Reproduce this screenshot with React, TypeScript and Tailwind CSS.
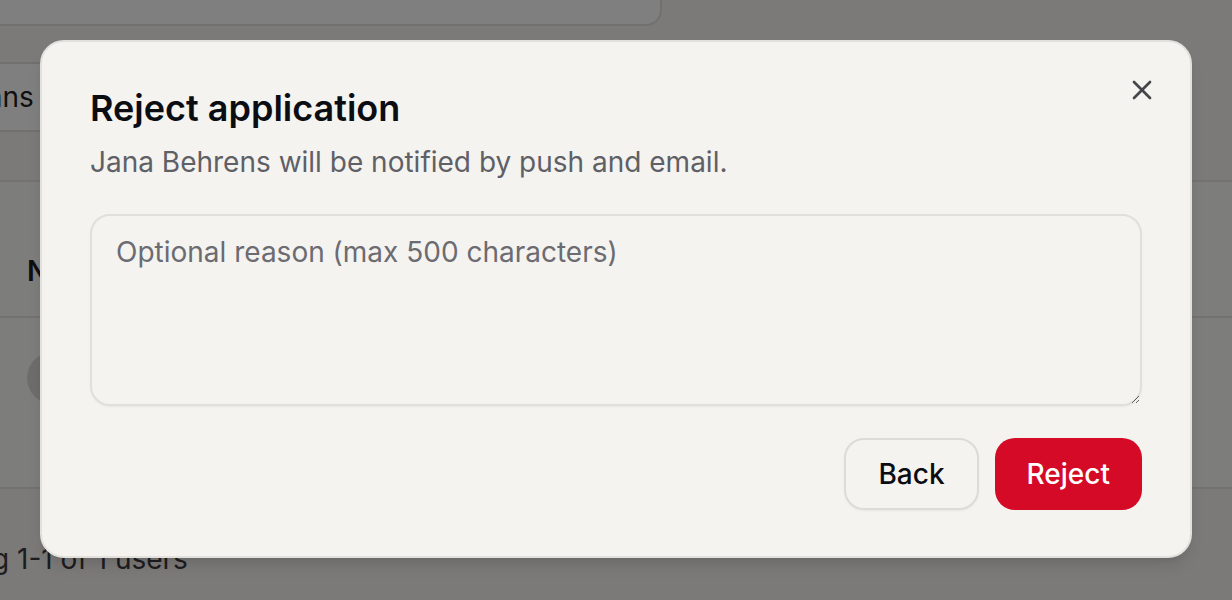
import { X } from "lucide-react";

function PageBehind() {
  return (
    <div className="flex flex-col text-[#1f1f23]">
      <div className="-mt-[50px] -ml-[64px] flex h-[76px] w-[726px] items-center rounded-[16px] border-2 border-[#e3e1dd] bg-white pl-[46px] text-[28px] text-[#6b6b70]">
        Search users...
      </div>
      <div className="mt-[36px] flex">
        <div className="-ml-[100px] flex h-[70px] w-[190px] items-center rounded-[16px] border-2 border-[#e3e1dd] bg-white pl-[20px] text-[28px]">
          All plans
        </div>
      </div>
      <div className="mt-[48px] flex h-[309px] flex-col border-y-2 border-[#e6e4e0] bg-[#fbfaf7]">
        <div className="flex h-[136px] items-end border-b-2 border-[#e6e4e0] pb-[24px] pl-[27px] text-[28px] font-semibold">
          Name
        </div>
        <div className="flex flex-1 items-start pt-[34px] pl-[27px]">
          <div className="h-[52px] w-[52px] rounded-full bg-[#dcdad6]" />
        </div>
      </div>
      <div className="flex h-[120px] items-center pt-[20px] text-[28px] text-[#3b3b40]">
        <span className="-ml-[105px]">Showing 1-1 of 1 users</span>
      </div>
    </div>
  );
}

export default function App() {
  return (
    <div className="relative h-[600px] w-full overflow-hidden bg-[#f6f4f0] font-['Inter',sans-serif]">
      <PageBehind />
      <div className="absolute inset-0 bg-black/50" />
      <div className="absolute top-[40px] left-[40px] flex w-[1152px] flex-col gap-[32px] rounded-[24px] border-2 border-[#e2e1dd] bg-[#f4f3f0] p-[48px] pb-[46px] shadow-lg">
        <div className="flex flex-col gap-[16px]">
          <h2 className="text-[36px] leading-none font-semibold text-[#0b0d12]">Reject application</h2>
          <p className="text-[28px] leading-[40px] text-[#5f5f66]">
            Jana Behrens will be notified by push and email.
          </p>
        </div>
        <textarea
          className="h-[192px] w-full resize-y rounded-[20px] border-2 border-[#e0dfdc] bg-transparent px-6 py-4 text-[28px] leading-[40px] text-[#0b0d12] shadow-xs outline-none placeholder:text-[#6b6b71]"
          placeholder="Optional reason (max 500 characters)"
        />
        <div className="flex justify-end gap-[16px]">
          <button className="h-[72px] rounded-[20px] border-2 border-[#dcdbd8] bg-transparent px-8 text-[28px] font-medium text-[#0b0d12] shadow-xs">
            Back
          </button>
          <button className="h-[72px] rounded-[20px] bg-[#d40a27] px-8 text-[28px] font-medium text-white">
            Reject
          </button>
        </div>
        <button className="absolute top-[32px] right-[32px] text-[#0b0d12] opacity-75">
          <X size={32} strokeWidth={2} />
        </button>
      </div>
    </div>
  );
}
